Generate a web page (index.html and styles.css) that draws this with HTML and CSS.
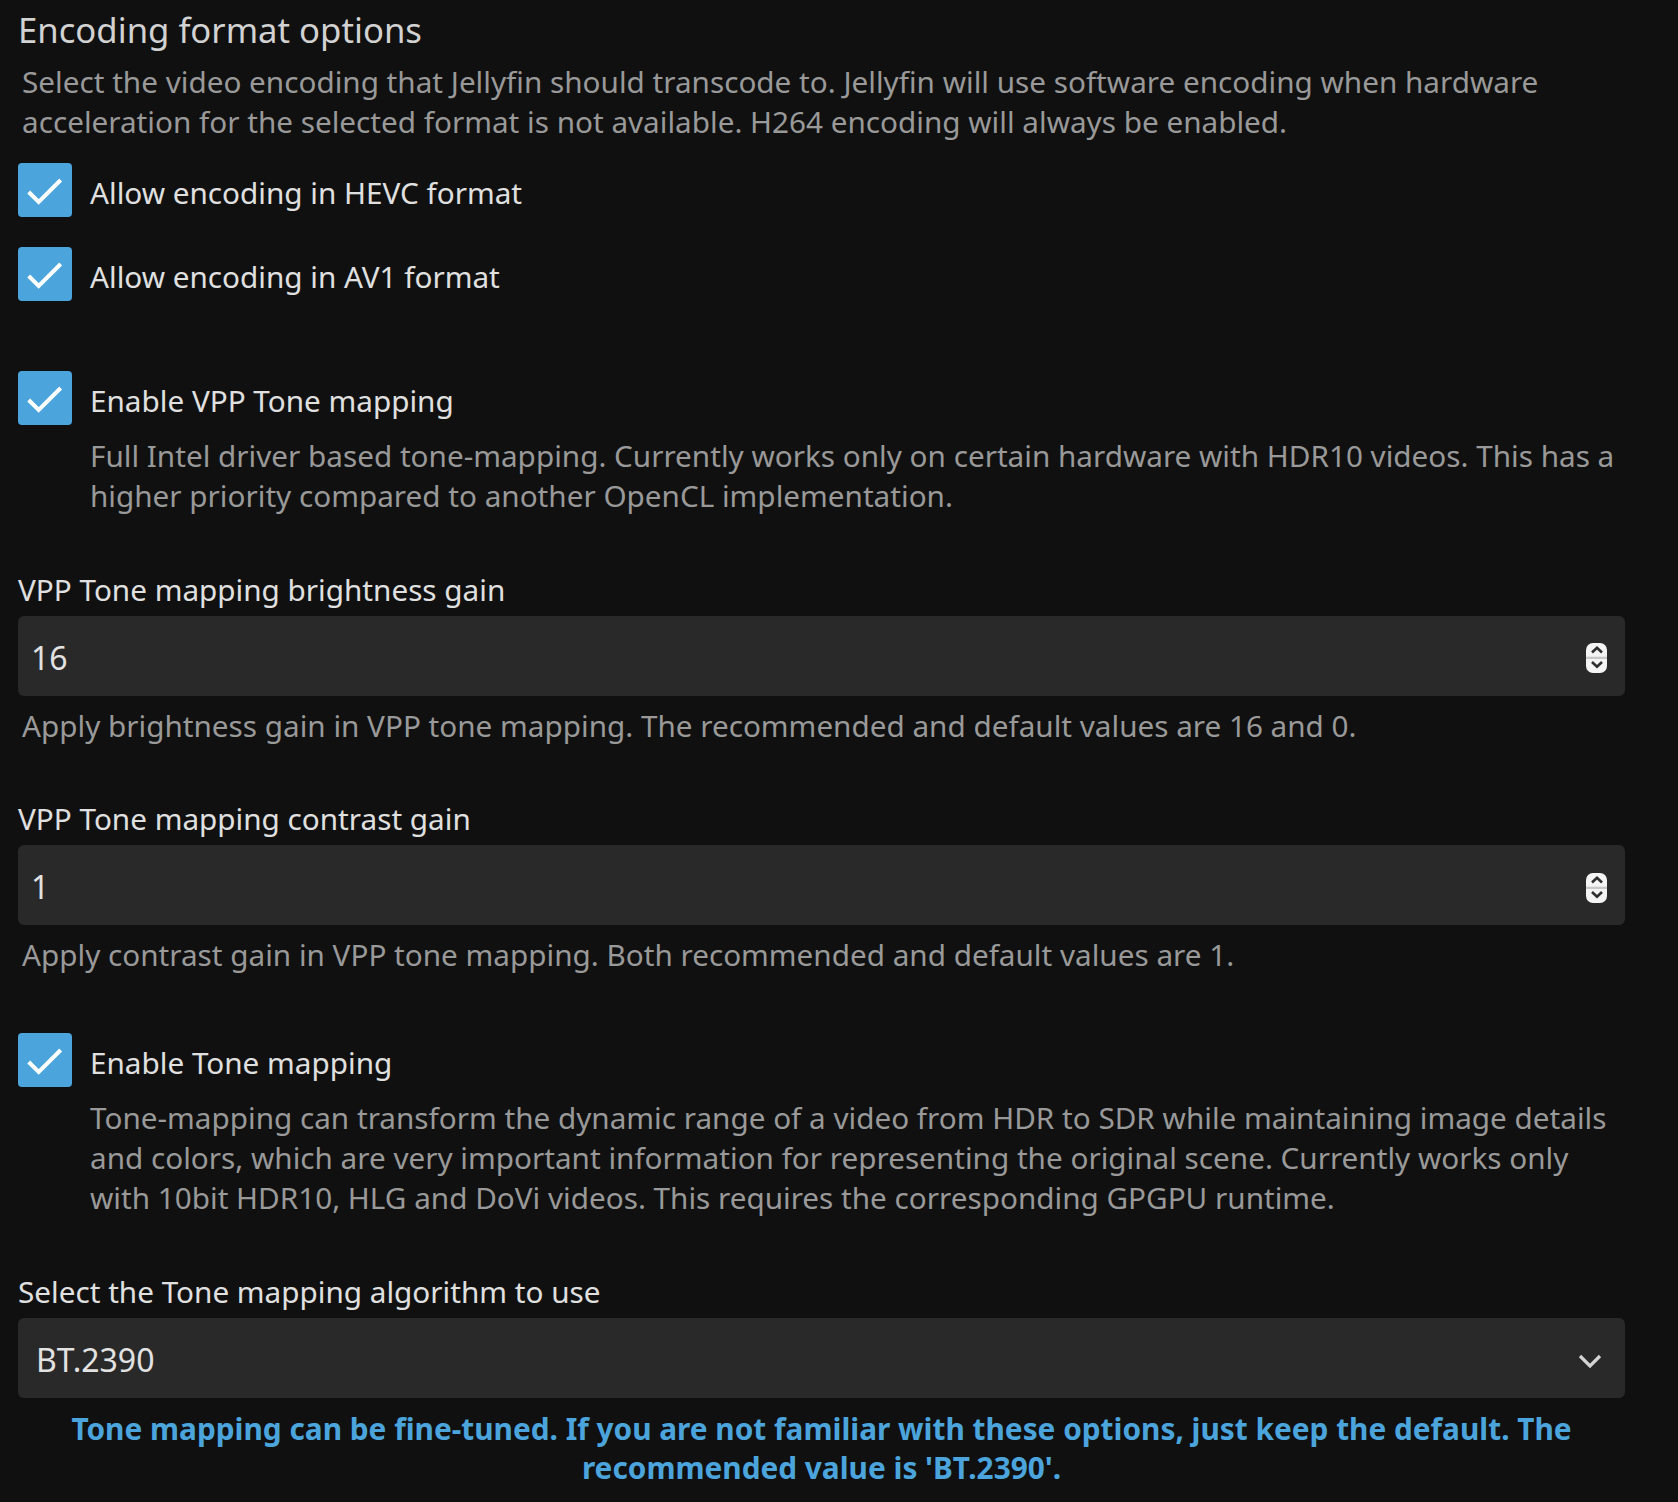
FILE: index.html
```html
<!DOCTYPE html>
<html lang="en">
<head>
<meta charset="utf-8">
<title>Encoding format options</title>
<link rel="stylesheet" href="styles.css">
</head>
<body>
<div class="page">
  <h2 class="title">Encoding format options</h2>
  <div class="desc section-desc">Select the video encoding that Jellyfin should transcode to. Jellyfin will use software encoding when hardware acceleration for the selected format is not available. H264 encoding will always be enabled.</div>

  <label class="check first">
    <svg class="box" width="54" height="54" viewBox="0 0 54 54"><rect width="54" height="54" rx="4" fill="#4ba5dc"/><polyline points="10.7,29 20.7,39 42.7,17" fill="none" stroke="#fff" stroke-width="4"/></svg>
    <span class="check-label">Allow encoding in HEVC format</span>
  </label>
  <label class="check second">
    <svg class="box" width="54" height="54" viewBox="0 0 54 54"><rect width="54" height="54" rx="4" fill="#4ba5dc"/><polyline points="10.7,29 20.7,39 42.7,17" fill="none" stroke="#fff" stroke-width="4"/></svg>
    <span class="check-label">Allow encoding in AV1 format</span>
  </label>

  <label class="check vpp">
    <svg class="box" width="54" height="54" viewBox="0 0 54 54"><rect width="54" height="54" rx="4" fill="#4ba5dc"/><polyline points="10.7,29 20.7,39 42.7,17" fill="none" stroke="#fff" stroke-width="4"/></svg>
    <span class="check-label">Enable VPP Tone mapping</span>
  </label>
  <div class="desc check-desc">Full Intel driver based tone-mapping. Currently works only on certain hardware with HDR10 videos. This has a higher priority compared to another OpenCL implementation.</div>

  <div class="field-label">VPP Tone mapping brightness gain</div>
  <div class="input">
    <span class="value">16</span>
    <svg class="spin" width="21" height="30" viewBox="0 0 21 30"><rect width="21" height="30" rx="7" fill="#f4f4f4"/><rect x="0" y="13.7" width="21" height="2.3" fill="#c8c8c8"/><polyline points="6,9.5 11,4.8 16,9.5" fill="none" stroke="#2e2e2e" stroke-width="2.6"/><polyline points="6,19 11,23.7 16,19" fill="none" stroke="#2e2e2e" stroke-width="2.6"/></svg>
  </div>
  <div class="desc field-desc">Apply brightness gain in VPP tone mapping. The recommended and default values are 16 and 0.</div>

  <div class="field-label">VPP Tone mapping contrast gain</div>
  <div class="input">
    <span class="value">1</span>
    <svg class="spin" width="21" height="30" viewBox="0 0 21 30"><rect width="21" height="30" rx="7" fill="#f4f4f4"/><rect x="0" y="13.7" width="21" height="2.3" fill="#c8c8c8"/><polyline points="6,9.5 11,4.8 16,9.5" fill="none" stroke="#2e2e2e" stroke-width="2.6"/><polyline points="6,19 11,23.7 16,19" fill="none" stroke="#2e2e2e" stroke-width="2.6"/></svg>
  </div>
  <div class="desc field-desc">Apply contrast gain in VPP tone mapping. Both recommended and default values are 1.</div>

  <label class="check tm">
    <svg class="box" width="54" height="54" viewBox="0 0 54 54"><rect width="54" height="54" rx="4" fill="#4ba5dc"/><polyline points="10.7,29 20.7,39 42.7,17" fill="none" stroke="#fff" stroke-width="4"/></svg>
    <span class="check-label">Enable Tone mapping</span>
  </label>
  <div class="desc check-desc">Tone-mapping can transform the dynamic range of a video from HDR to SDR while maintaining image details and colors, which are very important information for representing the original scene. Currently works only with 10bit HDR10, HLG and DoVi videos. This requires the corresponding GPGPU runtime.</div>

  <div class="field-label select-label">Select the Tone mapping algorithm to use</div>
  <div class="input select">
    <span class="value">BT.2390</span>
    <svg class="chev" width="24" height="15" viewBox="0 0 24 15"><polyline points="2,2 12,12 22,2" fill="none" stroke="#d4d4d4" stroke-width="3.2"/></svg>
  </div>
  <div class="note">Tone mapping can be fine-tuned. If you are not familiar with these options, just keep the default. The recommended value is 'BT.2390'.</div>
</div>
</body>
</html>
```

FILE: styles.css
```css
html, body {
  margin: 0;
  padding: 0;
  background: #101010;
}

body {
  font-family: "Noto Sans", "Open Sans", sans-serif;
  color: #dcdcdc;
}

.page {
  width: 1607px;
  padding-left: 18px;
  display: flex;
  flex-direction: column;
}

.title {
  margin: 9px 0 0;
  font-size: 34.7px;
  font-weight: 400;
  line-height: 41px;
  color: #d2d2d2;
}

.desc {
  font-size: 29.7px;
  line-height: 40px;
  color: #999999;
}

.section-desc {
  margin-top: 12px;
  padding-left: 4px;
}

.check {
  display: flex;
  align-items: center;
  gap: 18px;
  height: 54px;
}

.check .box {
  flex: none;
  display: block;
}

.check-label {
  font-size: 29.7px;
  line-height: 40px;
  color: #e0e0e0;
  padding-top: 5px;
}

.first { margin-top: 21px; }
.second { margin-top: 30px; }
.vpp { margin-top: 70px; }
.tm { margin-top: 58px; }

.check-desc {
  margin-top: 11px;
  padding-left: 72px;
}

.field-label {
  margin-top: 53.5px;
  font-size: 29.7px;
  line-height: 40px;
  color: #e0e0e0;
}

.select-label {
  margin-top: 54px;
}

.input {
  margin-top: 6px;
  height: 80px;
  border-radius: 6px;
  background: #292929;
  display: flex;
  align-items: center;
  justify-content: space-between;
  padding: 0 18px 0 13px;
}

.input .value {
  font-size: 32px;
  color: #e2e2e2;
  padding-top: 3px;
}

.spin {
  display: block;
  margin-top: 5px;
}

.select {
  padding: 0 23px 0 18px;
}

.chev {
  display: block;
  margin-top: 6px;
}

.field-desc {
  margin-top: 10px;
  padding-left: 4px;
}

.note {
  margin-top: 11px;
  font-size: 29.8px;
  line-height: 39px;
  font-weight: 700;
  color: #4ba5dc;
  text-align: center;
}
```
